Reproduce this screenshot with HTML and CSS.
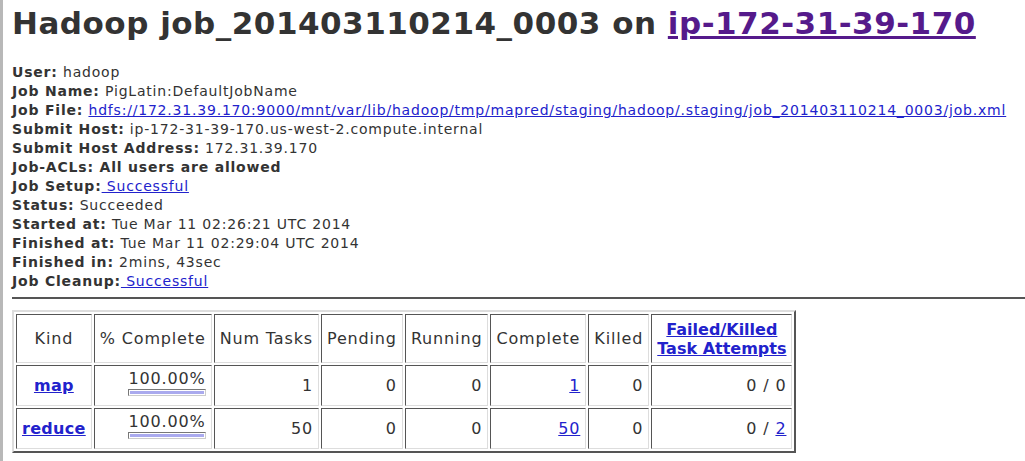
FILE: index.html
```html
<!DOCTYPE html>
<html>
<head>
<meta charset="utf-8">
<link rel="stylesheet" href="styles.css">
</head>
<body>
<div class="edge"></div>
<div class="page">
<h1 class="title">Hadoop job_201403110214_0003 on <a class="visited" href="#">ip-172-31-39-170</a></h1>
<div class="info">
<div><b>User:</b> hadoop</div>
<div><b>Job Name:</b> PigLatin:DefaultJobName</div>
<div><b>Job File:</b> <a href="#">hdfs://172.31.39.170:9000/mnt/var/lib/hadoop/tmp/mapred/staging/hadoop/.staging/job_201403110214_0003/job.xml</a></div>
<div><b>Submit Host:</b> ip-172-31-39-170.us-west-2.compute.internal</div>
<div><b>Submit Host Address:</b> 172.31.39.170</div>
<div><b>Job-ACLs: All users are allowed</b></div>
<div><b>Job Setup:</b><a href="#"> Successful</a></div>
<div><b>Status:</b> Succeeded</div>
<div><b>Started at:</b> Tue Mar 11 02:26:21 UTC 2014</div>
<div><b>Finished at:</b> Tue Mar 11 02:29:04 UTC 2014</div>
<div><b>Finished in:</b> 2mins, 43sec</div>
<div><b>Job Cleanup:</b><a href="#"> Successful</a></div>
</div>
<hr class="rule">
<table class="jobs">
<tr class="head">
<th>Kind</th><th>% Complete</th><th>Num Tasks</th><th>Pending</th><th>Running</th><th>Complete</th><th>Killed</th><th><a class="bold tight" href="#">Failed/Killed<br>Task Attempts</a></th>
</tr>
<tr>
<th><a class="bold" href="#">map</a></th>
<td class="pct">100.00%<div class="bar"><div class="fill" style="width:100%"></div></div></td>
<td>1</td><td>0</td><td>0</td><td><a href="#">1</a></td><td>0</td><td>0 / 0</td>
</tr>
<tr>
<th><a class="bold" href="#">reduce</a></th>
<td class="pct">100.00%<div class="bar"><div class="fill" style="width:100%"></div></div></td>
<td>50</td><td>0</td><td>0</td><td><a href="#">50</a></td><td>0</td><td>0 / <a href="#">2</a></td>
</tr>
</table>
</div>
</body>
</html>
```
FILE: styles.css
```css
html, body {
  margin: 0;
  padding: 0;
  background: #fff;
}
body {
  font-family: "DejaVu Sans", sans-serif;
  color: #333;
  font-size: 14px;
  letter-spacing: 0.8px;
  display: flex;
}
.edge {
  width: 3px;
  flex: none;
  background: #b8b8b8;
  min-height: 461px;
}
.page {
  flex: 1;
  padding-left: 9px;
}
.title {
  font-size: 31px;
  font-weight: bold;
  letter-spacing: 0.5px;
  margin: 1px 0 0 0;
  line-height: 44px;
  color: #333;
}
a {
  color: #2222cc;
}
a.visited {
  color: #551a8b;
}
.info {
  margin-top: 18px;
  line-height: 19px;
}
.rule {
  margin: 6px 0 11px 0;
  border: none;
  border-top: 2px solid #555;
}
.jobs {
  border-collapse: separate;
  border-spacing: 2px;
  border: 2px solid;
  border-color: #ddd #555 #555 #ddd;
  font-size: 16px;
  letter-spacing: 0.85px;
  line-height: 19px;
}
.jobs th, .jobs td {
  border: 1px solid;
  border-color: #555 #ddd #ddd #555;
  padding: 0 5px;
}
.jobs th {
  font-weight: normal;
  text-align: center;
}
.jobs .head th {
  height: 47px;
}
.jobs td {
  text-align: right;
  height: 39px;
}
a.bold {
  font-weight: bold;
  letter-spacing: 0.3px;
}
a.tight {
  letter-spacing: 0;
}
.jobs td.pct {
  vertical-align: top;
  padding-top: 3px;
  height: 36px;
}
.bar {
  margin-left: auto;
  margin-top: 1px;
  width: 74px;
  height: 3px;
  border: 1px solid #777;
  border-color: #777 #ccc #ccc #777;
  padding: 1px;
}
.fill {
  height: 100%;
  background: #aaaaee;
}
```
